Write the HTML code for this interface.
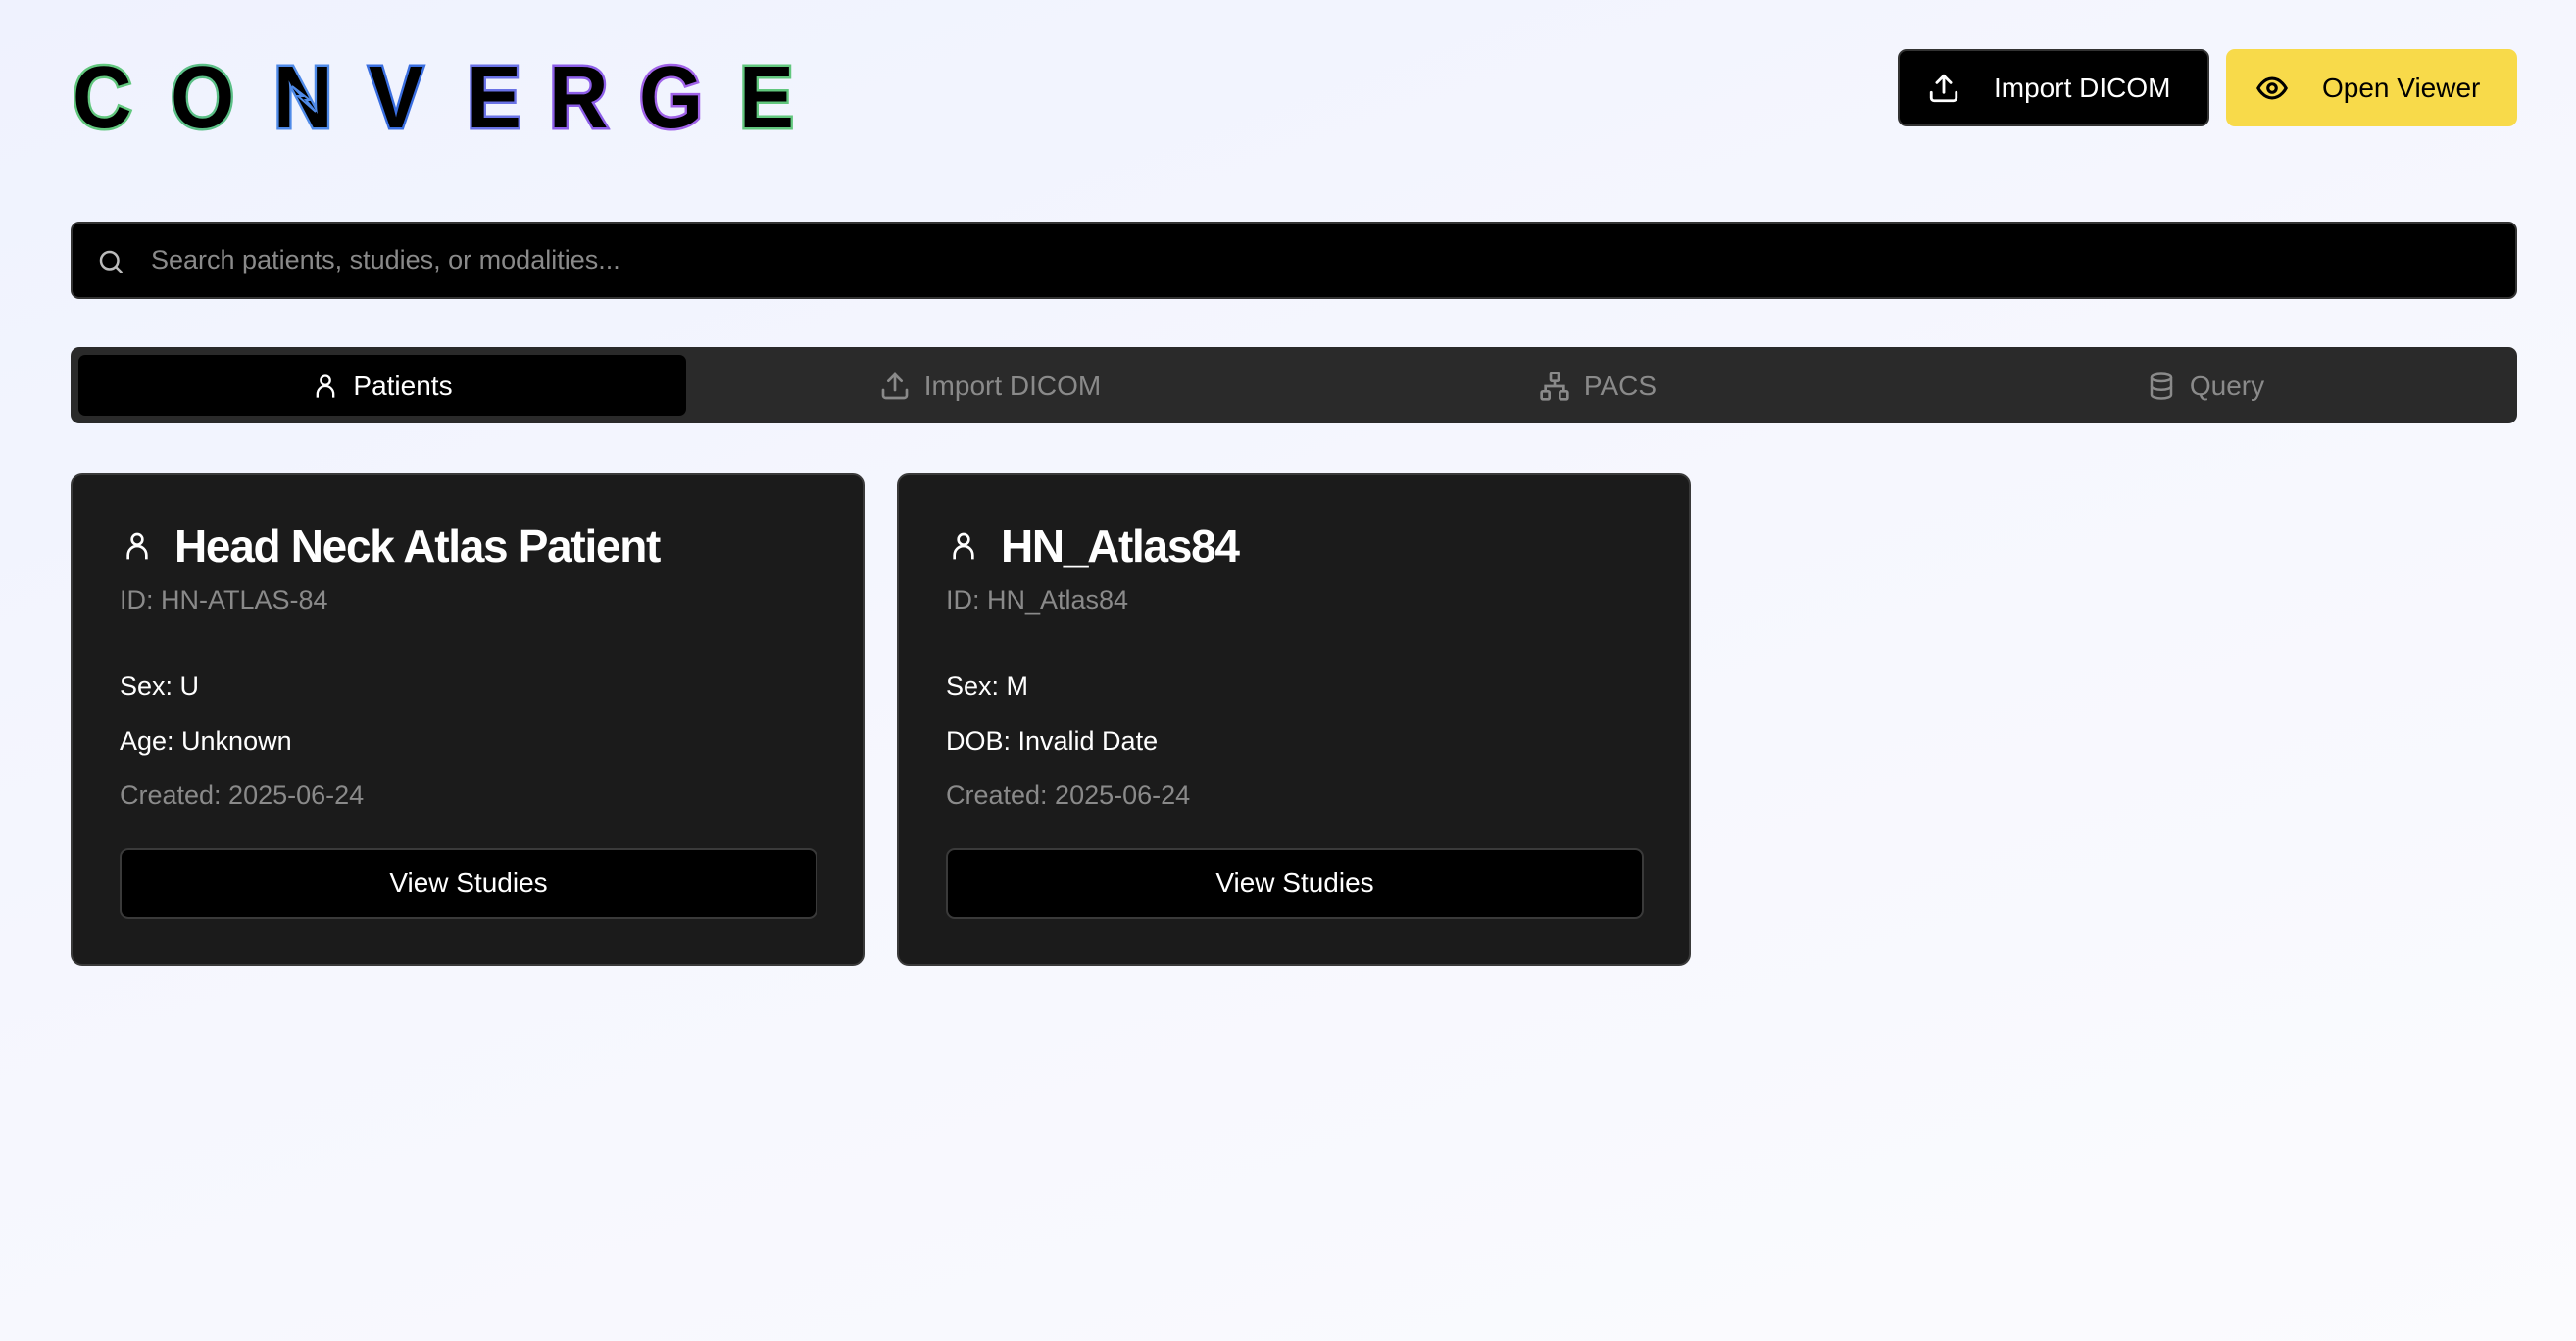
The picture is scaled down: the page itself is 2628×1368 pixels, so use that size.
<!DOCTYPE html>
<html><head><meta charset="utf-8"><style>
*{box-sizing:border-box;margin:0;padding:0}
body{width:2628px;height:1368px;overflow:hidden;font-family:"Liberation Sans",sans-serif;background:linear-gradient(160deg,#eff2fe 0%,#f6f7fe 50%,#fbfbfe 100%);position:relative}
.logo{position:absolute;left:0;top:0}
.logo span{position:absolute;top:55px;font-size:90px;font-weight:700;color:#000;-webkit-text-stroke:5px var(--c);paint-order:stroke fill;line-height:90px;transform:scaleX(0.93);transform-origin:left}
.btn{position:absolute;top:50px;height:79px;border-radius:9px;display:flex;align-items:center;font-size:28px}
.b1{left:1936px;width:318px;background:#000;border:2px solid #333;color:#fff}
.b2{left:2271px;width:297px;background:#f8da4a;color:#000}
.search{position:absolute;left:72px;top:226px;width:2496px;height:79px;background:#000;border:2px solid #333;border-radius:9px;color:#8a8a8a;font-size:27px;display:flex;align-items:center;padding-left:80px}
.tabs{position:absolute;left:72px;top:354px;width:2496px;height:78px;background:#2a2a2a;border-radius:9px}
.tab{position:absolute;top:1px;height:78px;display:flex;align-items:center;justify-content:center;font-size:28px;color:#8a8a8a;gap:14px}
.active{position:absolute;left:8px;top:8px;width:620px;height:62px;background:#000;border-radius:7px}
.card{position:absolute;top:483px;width:810px;height:502px;background:#1b1b1b;border:2px solid #3a3a3a;border-radius:12px;color:#fff}
.card .t{position:absolute;left:104px;top:45px;font-size:46px;font-weight:700;letter-spacing:-1.3px}
.card .ic{position:absolute;left:50px;top:54px}
.card .l{position:absolute;left:48px;font-size:27px}
.g{color:#8a8a8a}
.vs{position:absolute;left:48px;top:380px;width:712px;height:72px;background:#000;border:2px solid #3a3a3a;border-radius:9px;display:flex;align-items:center;justify-content:center;font-size:28px}
</style></head><body>
<div class="logo">
<span style="left:74px;--c:#62c77e">C</span>
<span style="left:174px;--c:#5bbf86">O</span>
<span style="left:279px;--c:#4f8ae8">N</span>
<span style="left:376px;--c:#3a6ee0">V</span>
<span style="left:476px;--c:#6a72e6">E</span>
<span style="left:560px;--c:#8c5ee8">R</span>
<span style="left:652px;--c:#a062e8">G</span>
<span style="left:754px;--c:#62c77e">E</span>
</div>
<svg style="position:absolute;left:296px;top:86px" width="30" height="30" viewBox="0 0 30 30"><path d="M2 2 L12 12 L8 12 L26 28 L16 16 L20 16 Z" fill="#000" stroke="#4f8ae8" stroke-width="2"/></svg>
<div class="btn b1"><svg style="margin-left:28px" width="34" height="34" viewBox="0 0 24 24" fill="none" stroke="#fff" stroke-width="2" stroke-linecap="round" stroke-linejoin="round"><path d="M21 15v4a2 2 0 0 1-2 2H5a2 2 0 0 1-2-2v-4"/><path d="M17 8l-5-5-5 5"/><path d="M12 3v12"/></svg><span style="margin-left:34px">Import DICOM</span></div>
<div class="btn b2"><svg style="margin-left:30px" width="34" height="34" viewBox="0 0 24 24" fill="none" stroke="#000" stroke-width="2.2"><path d="M2 12s3.5-7 10-7 10 7 10 7-3.5 7-10 7S2 12 2 12z"/><circle cx="12" cy="12" r="3"/></svg><span style="margin-left:34px">Open Viewer</span></div>
<div class="search"><svg style="position:absolute;left:24px;top:24px" width="30" height="30" viewBox="0 0 24 24" fill="none" stroke="#bbb" stroke-width="2"><circle cx="11" cy="11" r="7"/><path d="M21 21l-5-5"/></svg>Search patients, studies, or modalities...</div>
<div class="tabs">
<div class="active"></div>
<div class="tab" style="left:8px;width:620px;color:#fff"><svg width="28" height="30" viewBox="0 0 24 24" fill="none" stroke="#fff" stroke-width="2"><circle cx="12" cy="7" r="4"/><path d="M5 22v-3a6 6 0 0 1 14 0v3"/></svg>Patients</div>
<div class="tab" style="left:628px;width:620px"><svg width="32" height="32" viewBox="0 0 24 24" fill="none" stroke="#8a8a8a" stroke-width="2" stroke-linecap="round"><path d="M21 15v4a2 2 0 0 1-2 2H5a2 2 0 0 1-2-2v-4"/><path d="M17 8l-5-5-5 5"/><path d="M12 3v12"/></svg>Import DICOM</div>
<div class="tab" style="left:1248px;width:620px"><svg width="32" height="32" viewBox="0 0 24 24" fill="none" stroke="#8a8a8a" stroke-width="2"><rect x="9" y="2" width="6" height="6" rx="1"/><rect x="2" y="16" width="6" height="6" rx="1"/><rect x="16" y="16" width="6" height="6" rx="1"/><path d="M5 16v-4h14v4M12 8v4"/></svg>PACS</div>
<div class="tab" style="left:1868px;width:620px"><svg width="30" height="32" viewBox="0 0 24 24" fill="none" stroke="#8a8a8a" stroke-width="2"><ellipse cx="12" cy="5" rx="8" ry="3"/><path d="M4 5v14c0 1.7 3.6 3 8 3s8-1.3 8-3V5"/><path d="M4 12c0 1.7 3.6 3 8 3s8-1.3 8-3"/></svg>Query</div>
</div>
<div class="card" style="left:72px">
<svg class="ic" width="32" height="36" viewBox="0 0 24 24" fill="none" stroke="#fff" stroke-width="2"><circle cx="12" cy="7" r="4"/><path d="M5 22v-3a6 6 0 0 1 14 0v3"/></svg>
<div class="t">Head Neck Atlas Patient</div>
<div class="l g" style="top:112px">ID: HN-ATLAS-84</div>
<div class="l" style="top:200px">Sex: U</div>
<div class="l" style="top:256px">Age: Unknown</div>
<div class="l g" style="top:311px">Created: 2025-06-24</div>
<div class="vs">View Studies</div>
</div>
<div class="card" style="left:915px">
<svg class="ic" width="32" height="36" viewBox="0 0 24 24" fill="none" stroke="#fff" stroke-width="2"><circle cx="12" cy="7" r="4"/><path d="M5 22v-3a6 6 0 0 1 14 0v3"/></svg>
<div class="t">HN_Atlas84</div>
<div class="l g" style="top:112px">ID: HN_Atlas84</div>
<div class="l" style="top:200px">Sex: M</div>
<div class="l" style="top:256px">DOB: Invalid Date</div>
<div class="l g" style="top:311px">Created: 2025-06-24</div>
<div class="vs">View Studies</div>
</div>
</body></html>
